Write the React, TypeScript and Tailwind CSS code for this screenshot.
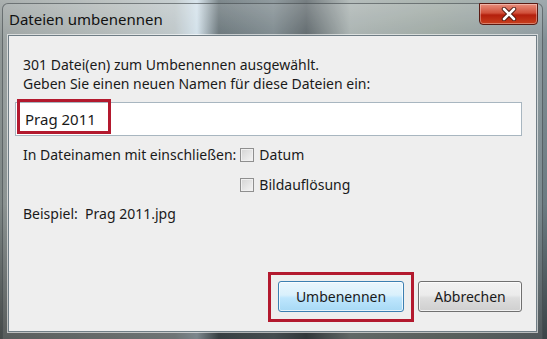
import React from "react";

const Check = ({ label }: { label: string }) => (
  <div className="flex items-center gap-[5px]">
    <span className="w-[14px] h-[14px] border border-[#8f8f8f] bg-gradient-to-br from-[#d4d4d4] to-[#f4f4f4] shadow-[inset_0_0_0_1px_#f0f0f0]" />
    <span>{label}</span>
  </div>
);

export default function App() {
  return (
    <div
      className="w-[547px] h-[339px] overflow-hidden relative bg-[linear-gradient(90deg,#7d8685_0%,#9aa3a2_20%,#a9b5b8_32%,#c5d8e4_36%,#3a4a50_40%,#55656b_50%,#2e3a3f_56%,#8e9a98_64%,#7f8d86_80%,#6b7b82_100%)]"
      style={{ fontFamily: '"Segoe UI", "Noto Sans", "Liberation Sans", sans-serif' }}
    >
      {/* glass frame */}
      <div className="absolute inset-0 bg-[linear-gradient(180deg,rgba(255,255,255,0.35)_0%,rgba(255,255,255,0.15)_12%,rgba(0,0,0,0)_60%,rgba(0,0,0,0.45)_100%)]" />
      <div className="relative h-full flex flex-col pl-[2px] pr-[4px] pt-[3px]">
        <div className="flex-1 flex flex-col rounded-t-[6px] border border-[#3d4447]/60 bg-white/10 px-[5px]">
          {/* title bar */}
          <div className="h-[31px] flex items-start justify-between">
            <span className="text-[15px] text-[#111] pl-[1px] pt-[8px] leading-none">Dateien umbenennen</span>
            <div className="w-[59px] h-[22px] -mt-[1px] -mr-[1px] rounded-b-[4px] border border-[#5a1a12] bg-[linear-gradient(180deg,#e88e7c_0%,#d0503a_45%,#b41f0c_55%,#c8401e_100%)] flex items-center justify-center shadow-[inset_0_0_0_1px_rgba(255,255,255,0.35)]">
              <svg width="16" height="14" viewBox="0 0 16 14">
                <path d="M3 2 L13 12 M13 2 L3 12" stroke="#4a1a10" strokeWidth="4.5" strokeLinecap="round" />
                <path d="M3 2 L13 12 M13 2 L3 12" stroke="#ffffff" strokeWidth="2.6" strokeLinecap="round" />
              </svg>
            </div>
          </div>
          {/* content */}
          <div className="h-[297px] bg-[#eeeeee] border border-[#6f7d85] shadow-[0_0_0_1px_rgba(255,255,255,0.6)] flex flex-col px-[14px] pt-[19px] text-[14px] text-[#1a1a1a] leading-[19px]">
            <div>301 Datei(en) zum Umbenennen ausgewählt.</div>
            <div>Geben Sie einen neuen Namen für diese Dateien ein:</div>
            <div className="relative mt-[9px] -ml-[8px] h-[34px] bg-white border border-[#a8b6c0] flex items-center pl-[9px] text-[15px]">
              <span>Prag 2011</span>
              <div className="absolute left-[1px] top-[-4px] w-[94px] h-[35px] border-[3px] border-[#b3192e]" />
            </div>
            <div className="mt-[8px] flex gap-[4px]">
              <span className="pt-[1px]">In Dateinamen mit einschließen:</span>
              <div className="flex flex-col gap-[11px] pt-[1px]">
                <Check label="Datum" />
                <Check label="Bildauflösung" />
              </div>
            </div>
            <div className="mt-[10px]">Beispiel:&nbsp; Prag 2011.jpg</div>
            <div className="flex-1" />
            <div className="flex justify-end gap-[14px] pb-[19px]">
              <div className="relative">
                <div className="w-[126px] h-[31px] rounded-[3px] border border-[#3c7fb1] bg-[linear-gradient(180deg,#eaf6fd_0%,#d9f0fc_45%,#bee6fd_55%,#a7d9f5_100%)] shadow-[inset_0_0_0_1px_rgba(255,255,255,0.7)] flex items-center justify-center">
                  Umbenennen
                </div>
                <div className="absolute -left-[10px] -top-[9px] w-[146px] h-[50px] border-[3px] border-[#b3192e]" />
              </div>
              <div className="w-[104px] h-[31px] rounded-[3px] border border-[#707070] bg-[linear-gradient(180deg,#f2f2f2_0%,#ebebeb_45%,#dddddd_55%,#cfcfcf_100%)] shadow-[inset_0_0_0_1px_rgba(255,255,255,0.7)] flex items-center justify-center">
                Abbrechen
              </div>
            </div>
          </div>
          <div className="h-[7px]" />
        </div>
      </div>
    </div>
  );
}
